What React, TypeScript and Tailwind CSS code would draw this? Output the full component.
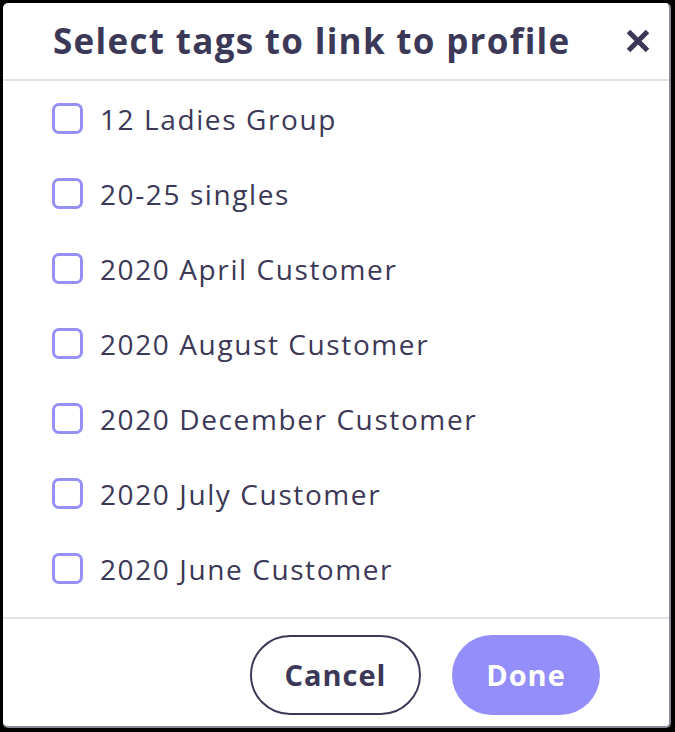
const tags = [
  "12 Ladies Group",
  "20-25 singles",
  "2020 April Customer",
  "2020 August Customer",
  "2020 December Customer",
  "2020 July Customer",
  "2020 June Customer",
];

export default function App() {
  return (
    <div className="h-[732px] w-[675px] bg-black pt-[3px] pr-[4px] pb-[4px] pl-[3px] font-['Open_Sans',sans-serif] text-[#3c3857]">
      <div className="flex h-full flex-col overflow-hidden rounded-[5px] border-r-2 border-b-2 border-[#8a8894] bg-white">
        {/* Header */}
        <div className="flex h-[76px] shrink-0 items-center justify-between pl-[50px] pr-[15px]">
          <h2 className="text-[35px] font-bold tracking-[1.3px]">Select tags to link to profile</h2>
          <button className="p-1">
            <svg width="24" height="24" viewBox="0 0 24 24" fill="none">
              <path d="M2.5 2.5L21.5 21.5M21.5 2.5L2.5 21.5" stroke="#3c3857" strokeWidth="5" />
            </svg>
          </button>
        </div>
        <div className="h-[2px] shrink-0 bg-[#e3e2e9]" />

        {/* Tag list */}
        <ul className="flex h-[536px] shrink-0 flex-col">
          {tags.map((tag) => (
            <li key={tag} className="flex h-[75px] shrink-0 items-center gap-[17px] pl-[49px]">
              <span className="h-[31px] w-[31px] shrink-0 rounded-[7px] border-[3px] border-[#9590f8] bg-white" />
              <span className="text-[28px] font-medium tracking-[1.6px]">{tag}</span>
            </li>
          ))}
        </ul>
        <div className="h-[2px] shrink-0 bg-[#e3e2e9]" />

        {/* Footer */}
        <div className="flex flex-1 items-start justify-end gap-[31px] pt-[16px] pr-[69px]">
          <button className="h-[80px] w-[171px] rounded-full border-2 border-[#3c3857] bg-white text-[29px] font-bold tracking-[1px] text-[#3c3857]">
            Cancel
          </button>
          <button className="h-[80px] w-[148px] rounded-full bg-[#938ef9] text-[29px] font-bold tracking-[1px] text-white">
            Done
          </button>
        </div>
      </div>
    </div>
  );
}
